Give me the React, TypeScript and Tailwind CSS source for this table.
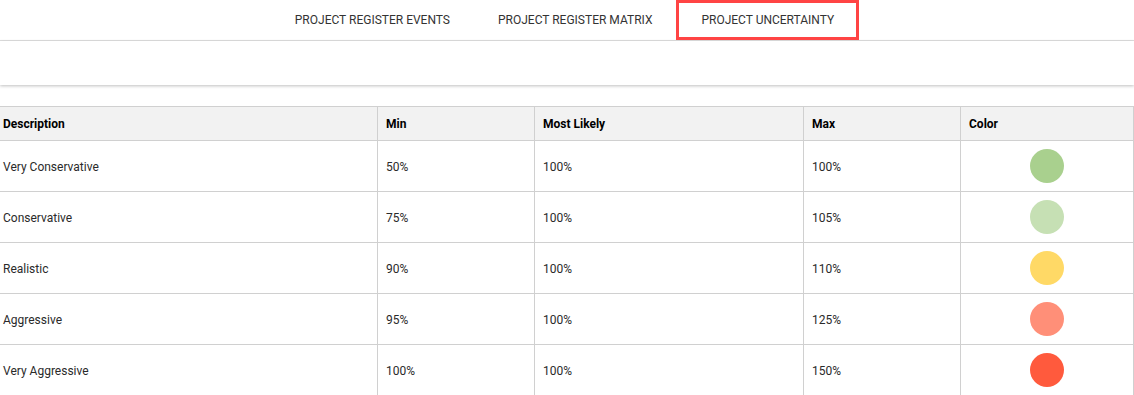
import React from "react";

const rows = [
  { d: "Very Conservative", min: "50%", ml: "100%", max: "100%", c: "bg-[#a9d08e]" },
  { d: "Conservative", min: "75%", ml: "100%", max: "105%", c: "bg-[#c6e0b4]" },
  { d: "Realistic", min: "90%", ml: "100%", max: "110%", c: "bg-[#ffd966]" },
  { d: "Aggressive", min: "95%", ml: "100%", max: "125%", c: "bg-[#ff8f78]" },
  { d: "Very Aggressive", min: "100%", ml: "100%", max: "150%", c: "bg-[#ff5a3d]" },
];

const grid = "grid grid-cols-[384px_157px_269px_157px_173px]";

export default function App() {
  return (
    <div className="w-[1134px] h-[395px] overflow-hidden bg-white font-['Roboto',sans-serif]">
      {/* tab bar */}
      <div className="flex justify-center pr-[4px] h-[41px] border-b border-[#e0e0e0]">
        <div className="flex items-center h-[40px] px-[24px] text-[12px] text-[#333] uppercase">
          Project Register Events
        </div>
        <div className="flex items-center h-[40px] px-[24px] text-[12px] text-[#333] uppercase">
          Project Register Matrix
        </div>
        <div className="flex items-center h-[40px] px-[22px] border-[3px] border-[#ff4444] text-[12px] text-[#333] uppercase">
          Project Uncertainty
        </div>
      </div>
      {/* white panel with shadow */}
      <div className="h-[44px] bg-white shadow-[0_1px_3px_rgba(0,0,0,0.25)]" />
      {/* table */}
      <div className="mt-[21px] ml-[-6px] w-[1140px] text-[12px] text-[#2a2a2a]">
        <div className={`${grid} h-[35px] bg-[#f2f2f2] border-y border-[#d0d0d0] font-bold text-black`}>
          <div className="flex items-center pl-[9px] border-r border-[#d0d0d0]">Description</div>
          <div className="flex items-center pl-[8px] border-r border-[#d0d0d0]">Min</div>
          <div className="flex items-center pl-[8px] border-r border-[#d0d0d0]">Most Likely</div>
          <div className="flex items-center pl-[8px] border-r border-[#d0d0d0]">Max</div>
          <div className="flex items-center pl-[8px] border-r border-[#d0d0d0]">Color</div>
        </div>
        {rows.map((r) => (
          <div key={r.d} className={`${grid} h-[51px] border-b border-[#d0d0d0]`}>
            <div className="flex items-center pl-[9px] pt-[2px] border-r border-[#d0d0d0]">{r.d}</div>
            <div className="flex items-center pl-[8px] pt-[2px] border-r border-[#d0d0d0]">{r.min}</div>
            <div className="flex items-center pl-[8px] pt-[2px] border-r border-[#d0d0d0]">{r.ml}</div>
            <div className="flex items-center pl-[8px] pt-[2px] border-r border-[#d0d0d0]">{r.max}</div>
            <div className="flex items-center justify-center border-r border-[#d0d0d0]">
              <div className={`w-[34px] h-[34px] rounded-full ${r.c}`} />
            </div>
          </div>
        ))}
      </div>
    </div>
  );
}
